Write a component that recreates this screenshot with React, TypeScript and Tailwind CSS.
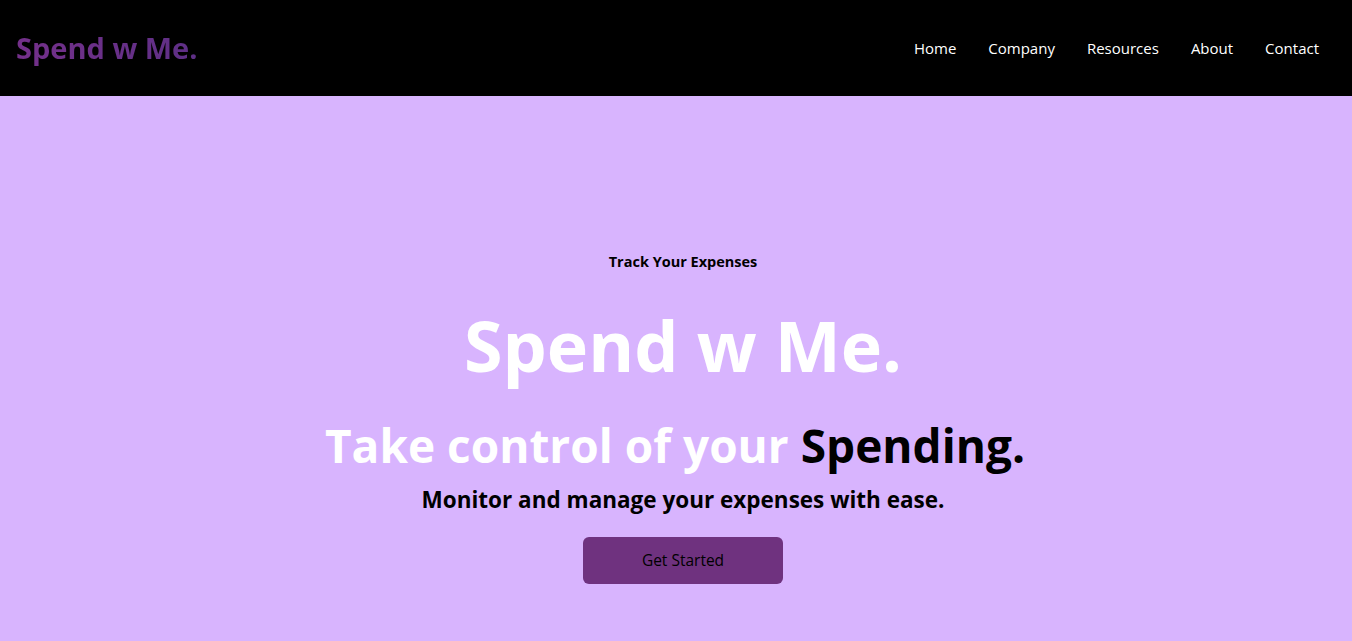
export default function App() {
  return (
    <div className="min-h-screen bg-[#d8b4fe]" style={{ fontFamily: '"Open Sans", "Noto Sans", sans-serif' }}>
      <nav className="h-24 bg-black flex items-center justify-between px-4">
        <h1 className="text-[29px] font-bold bg-gradient-to-r from-[#74308a] to-[#5e2f86] bg-clip-text text-transparent">
          Spend w Me.
        </h1>
        <ul className="flex items-center gap-8 pr-[17px] text-white text-[15px]">
          {['Home', 'Company', 'Resources', 'About', 'Contact'].map((item) => (
            <li key={item}>
              <a href="#">{item}</a>
            </li>
          ))}
        </ul>
      </nav>

      <section className="h-screen pl-[14px] pt-[3px] flex flex-col items-center justify-center text-center">
        <p className="text-[14.5px] font-bold text-black leading-5">Track Your Expenses</p>
        <h2 className="mt-[37px] text-[70px] leading-[72px] font-bold text-white">Spend w Me.</h2>
        <h3 className="mt-[40px] pr-[16px] text-[46px] leading-[48px] font-bold text-white">
          Take control of your <span className="text-black">Spending.</span>
        </h3>
        <p className="mt-[15px] text-[22.5px] leading-8 font-bold text-black">
          Monitor and manage your expenses with ease.
        </p>
        <button className="mt-[21px] w-[200px] h-[47px] rounded-md bg-[#6f327f] text-black text-[15.5px]">
          Get Started
        </button>
      </section>
    </div>
  );
}
